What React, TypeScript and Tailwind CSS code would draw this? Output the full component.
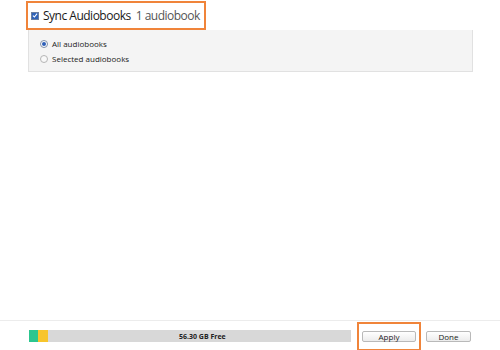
import React from "react";

export default function App() {
  return (
    <div
      className="w-[500px] h-[350px] bg-white flex flex-col overflow-hidden"
      style={{ fontFamily: '"Open Sans", "Noto Sans", sans-serif' }}
    >
      <div className="flex-1 pl-[26px] pt-[1px] pr-[27px]">
        <div className="w-[180px] h-[29px] border-2 border-[#f0843a] flex items-center pl-[3px] gap-[4px] whitespace-nowrap">
          <div className="shrink-0 w-[8px] h-[8px] bg-[#2f62b8] border border-[#6c7f9e] flex items-center justify-center">
            <svg width="7" height="7" viewBox="0 0 8 8">
              <path d="M1.2 4.2 L3.2 6 L6.8 1.6" stroke="white" strokeWidth="1.4" fill="none" />
            </svg>
          </div>
          <span className="text-[12px] text-[#1a1a1a] leading-none tracking-[-0.5px]">Sync Audiobooks</span>
          <span className="text-[12px] text-[#555] leading-none ml-[1px] tracking-[-0.5px]">1 audiobook</span>
        </div>
        <div className="ml-[2px] h-[42px] bg-[#f4f4f4] border border-[#e1e1e1] border-t-0 flex flex-col pl-[11px] pt-[9px] gap-[5px]">
          <div className="flex items-center gap-[4px] h-[10px]">
            <div className="w-[8px] h-[8px] rounded-full border border-[#7d8ea8] bg-white flex items-center justify-center">
              <div className="w-[4px] h-[4px] rounded-full bg-[#2d5fb8]" />
            </div>
            <span className="text-[8px] text-[#222] leading-none">All audiobooks</span>
          </div>
          <div className="flex items-center gap-[4px] h-[10px]">
            <div className="w-[8px] h-[8px] rounded-full border border-[#b5b5b5] bg-[#f8f8f8]" />
            <span className="text-[8px] text-[#222] leading-none">Selected audiobooks</span>
          </div>
        </div>
      </div>
      <div className="h-[30px] border-t border-[#ececec] flex items-start relative">
        <div className="ml-[29px] mt-[9px] w-[322px] h-[12px] bg-[#d8d8d8] flex items-center relative">
          <div className="w-[9px] h-full bg-[#2cc68f]" />
          <div className="w-[10px] h-full bg-[#f7c52c]" />
          <span className="absolute left-[150px] text-[7px] font-bold text-[#222] leading-none">56.30 GB Free</span>
        </div>
        <div className="ml-[6px] mt-[1px] w-[64px] h-[29px] border-2 border-[#f0843a] flex items-start justify-center pt-[7px]">
          <div className="w-[54px] h-[11px] border border-[#b9b9b9] rounded-[2px] bg-gradient-to-b from-white to-[#ececec] flex items-center justify-center text-[8px] text-[#222] leading-none">
            Apply
          </div>
        </div>
        <div className="ml-[5px] mt-[10px] w-[45px] h-[11px] border border-[#b9b9b9] rounded-[2px] bg-gradient-to-b from-white to-[#ececec] flex items-center justify-center text-[8px] text-[#222] leading-none">
          Done
        </div>
      </div>
    </div>
  );
}
